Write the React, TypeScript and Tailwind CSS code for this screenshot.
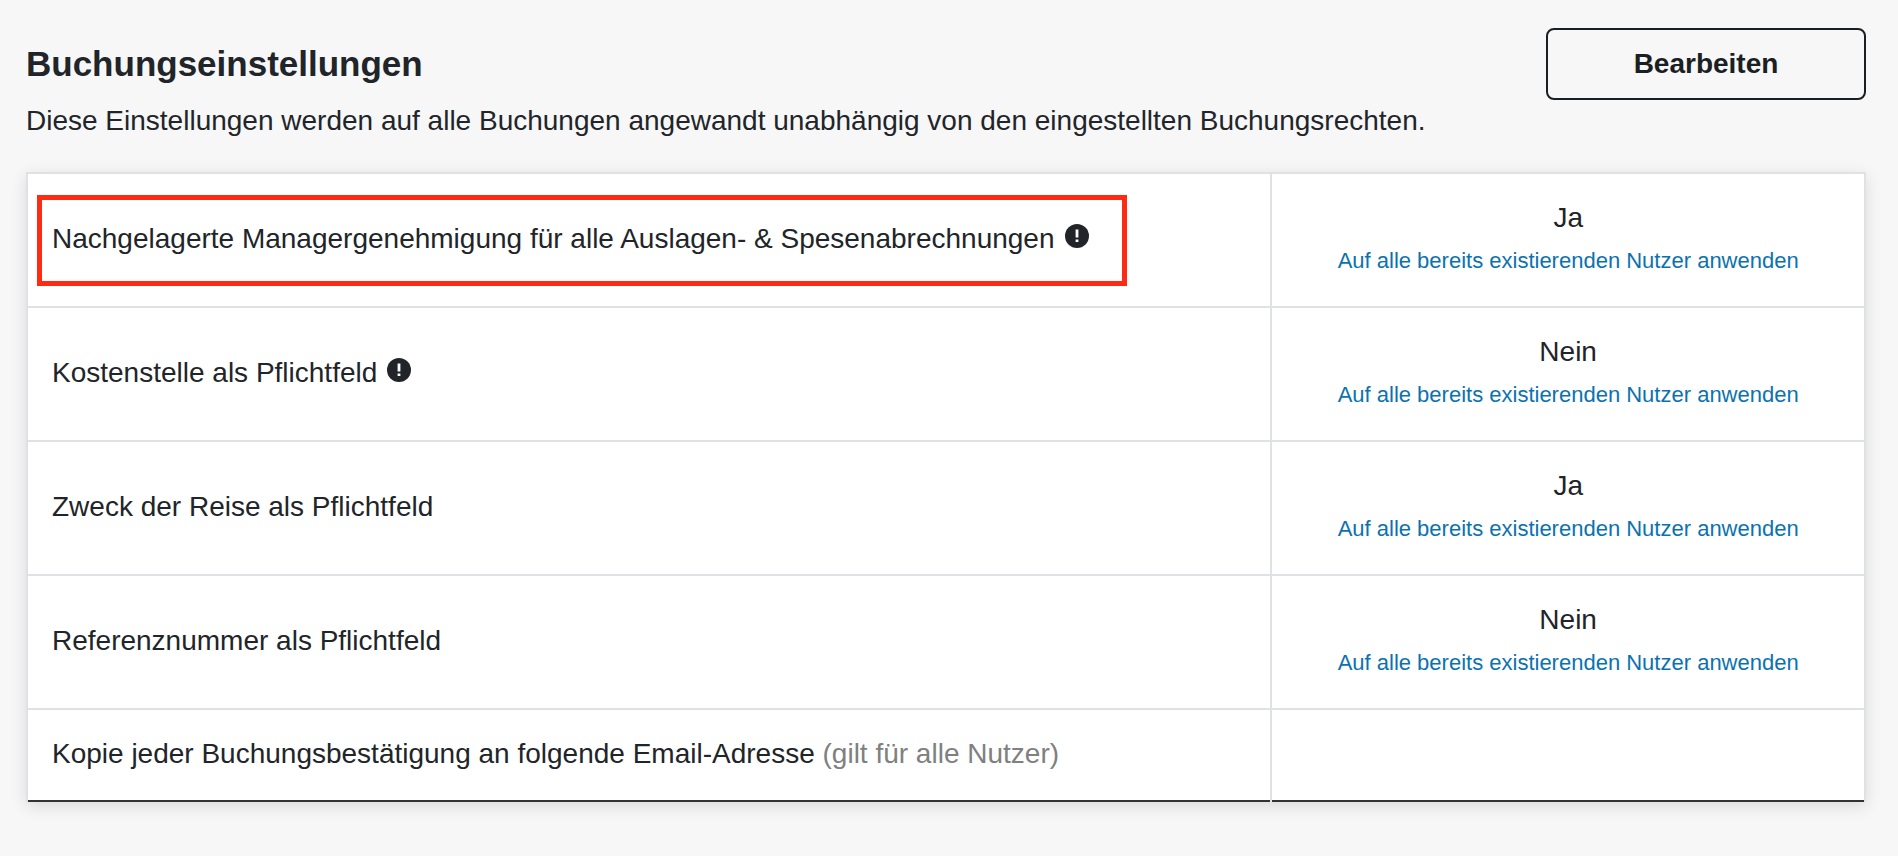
import clsx from 'clsx'

type Setting = {
  label: string
  hint?: string
  info?: boolean
  highlighted?: boolean
  value?: string
}

const settings: Setting[] = [
  {
    label: 'Nachgelagerte Managergenehmigung für alle Auslagen- & Spesenabrechnungen',
    info: true,
    highlighted: true,
    value: 'Ja',
  },
  { label: 'Kostenstelle als Pflichtfeld', info: true, value: 'Nein' },
  { label: 'Zweck der Reise als Pflichtfeld', value: 'Ja' },
  { label: 'Referenznummer als Pflichtfeld', value: 'Nein' },
  {
    label: 'Kopie jeder Buchungsbestätigung an folgende Email-Adresse',
    hint: '(gilt für alle Nutzer)',
  },
]

const cell = 'border-x-2 border-t-2 border-[#dee2e6] px-6'

function InfoIcon() {
  return (
    <svg viewBox="0 0 24 24" className="ml-2.5 inline-block size-6 align-baseline" aria-hidden="true">
      <circle cx="12" cy="12" r="12" fill="#212529" />
      <path d="M10.6 5.6h2.8v7.8h-2.8zM10.6 15.4h2.8v2.6h-2.8z" fill="#fff" />
    </svg>
  )
}

function SettingRow({ label, hint, info, highlighted, value }: Setting) {
  return (
    <tr>
      <th scope="row" className={clsx(cell, 'pt-[23px] pb-[25px] text-left font-normal')}>
        <span className="relative block w-fit">
          {label}
          {hint && <span className="text-[#808080]"> {hint}</span>}
          {info && <InfoIcon />}
          {highlighted && (
            <span className="pointer-events-none absolute -top-[23px] -right-[38px] -bottom-[26px] -left-[15px] border-5 border-[#ff2a12]" />
          )}
        </span>
      </th>
      <td className={clsx(cell, 'py-[23px] text-center')}>
        {value && (
          <>
            <div>{value}</div>
            <a href="#" className="block text-[22px] leading-[44px] text-[#0b72b0] hover:underline">
              Auf alle bereits existierenden Nutzer anwenden
            </a>
          </>
        )}
      </td>
    </tr>
  )
}

export default function App() {
  return (
    <main className="min-h-screen bg-[#f7f7f7] pt-7 pr-8 pb-12 pl-[26px] font-['Liberation_Sans',Arial,sans-serif] text-[28px] leading-[42px] text-[#212529]">
      <header className="flex items-start justify-between gap-8">
        <div className="pt-4">
          <h1 className="text-[35px] leading-10 font-bold">Buchungseinstellungen</h1>
          <p className="mt-4">
            Diese Einstellungen werden auf alle Buchungen angewandt unabhängig von den eingestellten
            Buchungsrechten.
          </p>
        </div>
        <button
          type="button"
          className="h-[72px] w-80 shrink-0 rounded-lg border-2 border-[#1a1f24] font-bold text-[#1a1f24] hover:bg-white"
        >
          Bearbeiten
        </button>
      </header>

      <table className="mt-[30px] w-full table-fixed border-collapse border-b-2 border-[#333] bg-white shadow-[0_4px_16px_rgba(0,0,0,0.12)]">
        <colgroup>
          <col />
          <col className="w-[32.3%]" />
        </colgroup>
        <tbody>
          {settings.map((setting) => (
            <SettingRow key={setting.label} {...setting} />
          ))}
        </tbody>
      </table>
    </main>
  )
}
